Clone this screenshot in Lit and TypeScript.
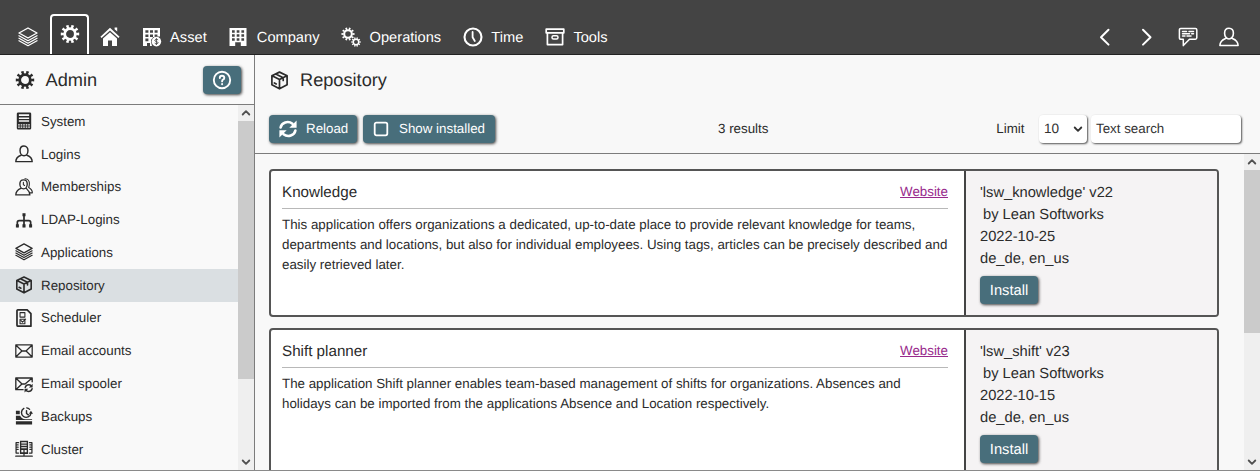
import { LitElement, html, css, svg } from "lit";
import { customElement, property } from "lit/decorators.js";
import { classMap } from "lit/directives/class-map.js";

const gear = (cx: number, cy: number, r: number) => svg`
  <circle cx=${cx} cy=${cy} r=${r * 0.56} fill="none" stroke="currentColor" stroke-width=${r * 0.3}></circle>
  <circle cx=${cx} cy=${cy} r=${r * 0.8} fill="none" stroke="currentColor" stroke-width=${r * 0.32}
    pathLength="100" stroke-dasharray="5 5" stroke-dashoffset="2.5"></circle>`;

const line = (d: string, w = 1.5) => svg`
  <path d=${d} fill="none" stroke="currentColor" stroke-width=${w} stroke-linejoin="round" stroke-linecap="round"></path>`;
const fill = (d: string) => svg`<path d=${d} fill="currentColor" fill-rule="evenodd"></path>`;

const icons: Record<string, unknown> = {
  layers: svg`${line("M10 1L19 6L10 11L1 6Z", 1.4)}${line("M1 8.7l9 5 9-5M1 11.2l9 5 9-5M1 13.7l9 5 9-5", 1.3)}`,
  gear: gear(10, 10, 9.6),
  home: fill("M10 .8L19.6 9.7L18.4 11L10 3.6L1.6 11L.4 9.7ZM14.6.6h2.6v4l-2.6-2.3ZM10 5.2L17 11.4V19h-5v-5.6H8V19H3v-7.6Z"),
  asset: svg`
    ${fill("M1 1h17v8.6h-2.6V7.4h-2.8V10h-1.4L9 13v2l1 4H1zM3.4 3.2v2.6h3V3.2zM8 3.2v2.6h3V3.2zM12.6 3.2v2.6h3V3.2zM3.4 7.4V10h3V7.4zM8 7.4V10h3V7.4zM3.4 11.6v2.6h3v-2.6zM5 16v3h3v-3z")}
    <circle cx="14.4" cy="14.6" r="4.8" fill="currentColor"></circle>
    <path d="M16.1 13c-.8-1.1-3.3-.8-3.3.5 0 1.3 3.3.9 3.3 2.2 0 1.3-2.5 1.5-3.4.4M14.4 11.2v6.8" fill="none" stroke="#444" stroke-width=".9"></path>`,
  company: fill("M1.5 1h17v18h-5.7v-3.8H7.2V19H1.5zM4 3.2v2.5h2.7V3.2zM8.7 3.2v2.5h2.7V3.2zM13.4 3.2v2.5h2.7V3.2zM4 7.3v2.5h2.7V7.3zM8.7 7.3v2.5h2.7V7.3zM13.4 7.3v2.5h2.7V7.3zM4 11.3v2.5h2.7v-2.5zM8.7 11.3v2.5h2.7v-2.5zM13.4 11.3v2.5h2.7v-2.5z"),
  gears: svg`${gear(7, 7, 6.8)}${gear(15, 15, 4.9)}`,
  clock: svg`<circle cx="10" cy="10" r="8.5" fill="none" stroke="currentColor" stroke-width="2.1"></circle>${line("M9.6 4.9V10.3L11.8 14", 1.8)}`,
  archive: svg`${line("M1.2 2.2h17.6v3.6h-17.6zM2.4 5.8v11.8h15.2V5.8", 1.7)}<rect x="7" y="8.8" width="6" height="3.2" rx="1.5" fill="none" stroke="currentColor" stroke-width="1.5"></rect>`,
  prev: line("M13.5 2.8L6 10.2l7.5 7.4", 2),
  next: line("M7 2.8l7.5 7.4L7 17.6", 2),
  chat: line("M2.8 1.4h14.6q1.4 0 1.4 1.4v8q0 1.4-1.4 1.4H11.5L5.3 18.6V12.2H2.8q-1.4 0-1.4-1.4v-8q0-1.4 1.4-1.4zM4.5 4.5h4M11 4.5h4.5M4.5 6.8h7M13.7 6.8h1.8M4.5 9.1h2.5M9 9.1h4", 1.5),
  person: line("M10 1.2C7.1 1.2 5.6 3.3 5.6 6.2C5.6 9.2 7.4 12 10 12S14.4 9.2 14.4 6.2C14.4 3.3 12.9 1.2 10 1.2zM6.6 11.4C3.5 12.6 1 14 .9 18.5h18.2C19 14 16.5 12.6 13.4 11.4", 1.6),
  members: svg`${line("M9.5 2C6.8 2 5.4 4 5.4 6.6C5.4 9.4 7 12 9.5 12S13.6 9.4 13.6 6.6C13.6 4 12 2 9.5 2zM6.4 11.6C3.5 12.9 1 14.3 .9 18.8h15.6C16.4 14.9 14 12.9 12.6 11.6", 1.5)}${line("M11 .9C15.5 .5 17 5 15.2 10.5C18 12 19.3 13.5 19.3 16.5h-2.5M9.3 4.8v2.5l1.3 1", 1.2)}`,
  system: svg`${fill("M3.5.5h13q1.5 0 1.5 1.5v16q0 1.5-1.5 1.5h-13Q2 19.5 2 18V2Q2 .5 3.5.5zM4.3 2.5v2h11.4v-2zM4.3 6v1.7h11.4V6zM4.3 9.2v1.5h11.4V9.2z")}<path d="M3.5 14.3h13M3.5 16.8h13" stroke="#f9f9f9" stroke-width="1.3" stroke-dasharray="1.8 1"></path>`,
  tree: svg`${line("M10 4v13M2.6 17v-4.2Q2.6 10.8 4.6 10.8h10.8q2 0 2 2V17", 1.9)}${fill("M8.3 2.5h3.4v3.4H8.3zM1 14.8h3.3v3.4H1zM8.3 14.8h3.4v3.4H8.3zM15.7 14.8H19v3.4h-3.3z")}`,
  box: line("M10 1.2L18 4.9V14.5L10 18.7L2 14.5V4.9ZM2.2 5L10 8.9L17.8 5M10 9v9.5M6 3.1L13.9 7V10M4.6 12.6l2 1", 1.8),
  schedule: svg`${line("M3.5 .9h10L17.7 5.2V19.1h-14.2Q2.2 19.1 2.2 18V2Q2.2 .9 3.5 .9z", 1.9)}${line("M5.6 4h5.4v5h-5.4zM5.6 11.3h5.4v5h-5.4zM6.8 13l1.5 1.7 3.5-3.5", 1.2)}`,
  mail: line("M.9 3.3h18.2v13.4H.9zM1.2 3.6L7.8 10h4.4L18.8 3.6M1.2 16.4L7.4 10.2M18.8 16.4L12.6 10.2", 1.4),
  spool: svg`${line("M9 16.3H.9V3.3h18.2V7.5M1.2 3.6L7.8 10h3.4L18.8 3.6M1.2 16L7.4 10.2", 1.5)}${line("M11.3 13.8Q12.3 10.8 15.3 10.8Q17 10.8 18 12M19 15.2Q18 18.3 15 18.3Q13.2 18.3 12.2 17", 1.6)}${fill("M19.6 9.6v4.2h-4.2zM10.6 19.5v-4.2h4.2z")}`,
  backup: svg`${fill("M1 4.2h4.3v3.8H1zM1 9.6h4.7q1.8 3.6 5.8 3.9H19v1H1zM1 15.8h18v3.7H1z")}${line("M9.8 1.6A5.3 5.3 0 1 0 17.7 7M12.8 4v3.2l2 1.5", 1.6)}${line("M13 .9q2 .2 3.3 1.7", 1.4)}${fill("M15.4 7.4h4.6l-2.3-3.2z")}`,
  cluster: svg`${fill("M5.5.8h9v14.7h-9zM7 2.6v1.4h6V2.6zM7 5.3v1.2h6V5.3zM7 8v1.2h6V8zM7 11v2.5h2.3V11zM10.7 11v2.5H13V11z")}${line("M4 3H1.2v11.5H4M16 3h2.8v11.5H16M2.5 5.5h1M2.5 8h1M2.5 10.5h1M16.5 5.5h1M16.5 8h1M16.5 10.5h1M10 15.5v2M.8 18h18.4", 1.4)}`,
  help: svg`<circle cx="10" cy="10" r="8.2" fill="none" stroke="currentColor" stroke-width="1.9"></circle>${line("M7.8 8Q7.8 5.7 10 5.7T12.3 7.7Q12.3 9 11 9.7Q10.1 10.2 10.1 11.4M10.1 14v.2", 1.9)}`,
  reload: svg`${line("M2.6 8.5C3.5 3.6 10 1.2 14.5 4.8M17.4 11.5C16.5 16.4 10 18.8 5.5 15.2", 2.6)}${fill("M18.6 1.5v7.3h-7.3zM1.4 18.5v-7.3h7.3z")}`,
  check: svg`<rect x="3.7" y="3.7" width="12.6" height="12.6" rx="1.7" fill="none" stroke="currentColor" stroke-width="1.8"></rect>`,
  up: line("M6.7 11.5L10 8.2l3.3 3.3", 1.8),
  down: line("M6.7 8.5L10 11.8l3.3-3.3", 1.8),
};

@customElement("ui-icon")
class UiIcon extends LitElement {
  @property() name = "";
  @property({ type: Number }) size = 20;
  static styles = css`
    :host { display: block; flex: none; line-height: 0; }
    svg { display: block; }
  `;
  render() {
    return html`<svg width=${this.size} height=${this.size} viewBox="0 0 20 20">${icons[this.name]}</svg>`;
  }
}

@customElement("ui-scrollbar")
class UiScrollbar extends LitElement {
  @property({ type: Number }) thumb = 100;
  static styles = css`
    :host { display: flex; flex-direction: column; flex: none; width: 16px; background: #efefef; color: #505050; overflow: hidden; }
    .end { height: 16px; display: flex; align-items: center; justify-content: center; flex: none; }
    .thumb { background: #cbcbcb; flex: none; }
    .space { flex: 1; }
  `;
  render() {
    return html`<div class="end"><ui-icon name="up"></ui-icon></div>
      <div class="thumb" style="height:${this.thumb}px"></div>
      <div class="space"></div>
      <div class="end"><ui-icon name="down"></ui-icon></div>`;
  }
}

const nav = [
  ["asset", "Asset"], ["company", "Company"], ["gears", "Operations"], ["clock", "Time"], ["archive", "Tools"],
];

const menu = [
  ["system", "System"], ["person", "Logins"], ["members", "Memberships"], ["tree", "LDAP-Logins"],
  ["layers", "Applications"], ["box", "Repository"], ["schedule", "Scheduler"], ["mail", "Email accounts"],
  ["spool", "Email spooler"], ["backup", "Backups"], ["cluster", "Cluster"],
];

const apps = [
  {
    title: "Knowledge", id: "'lsw_knowledge' v22", date: "2022-10-25",
    lines: [
      "This application offers organizations a dedicated, up-to-date place to provide relevant knowledge for teams,",
      "departments and locations, but also for individual employees. Using tags, articles can be precisely described and",
      "easily retrieved later.",
    ],
  },
  {
    title: "Shift planner", id: "'lsw_shift' v23", date: "2022-10-15",
    lines: [
      "The application Shift planner enables team-based management of shifts for organizations. Absences and",
      "holidays can be imported from the applications Absence and Location respectively.",
    ],
  },
];

@customElement("app-root")
class AppRoot extends LitElement {
  static styles = css`
    :host { display: flex; flex-direction: column; width: 1260px; height: 471px; overflow: hidden; box-sizing: border-box;
      background: #f8f8f8; color: #2b2b2b; font: 13.35px "Liberation Sans", Arial, sans-serif; text-rendering: geometricPrecision;
      border-bottom: 1px solid #8a8a8a; white-space: nowrap; }
    * { box-sizing: border-box; }
    .top { height: 55px; flex: none; background: #444; border-bottom: 1px solid #222; color: #fff; display: flex; align-items: flex-end; padding-left: 18px; }
    .nav { height: 34px; display: flex; align-items: center; font-size: 14.65px; }
    .nav span { padding-top: 2px; }
    .tab { margin-left: 12px; width: 39px; height: 40px; border: 2px solid #fff; border-bottom: 0; border-radius: 4px 4px 0 0; background: #3d3d3d; display: flex; justify-content: center; padding-top: 8px; }
    .item { display: flex; align-items: center; gap: 8.5px; margin-left: 21.6px; }
    .item.first { margin-left: 11px; }
    .right { margin-left: auto; padding-right: 21px; gap: 21.3px; }
    .body { flex: 1; min-height: 0; display: flex; }
    .side { width: 255px; flex: none; border-right: 1px solid #7c7c7c; display: flex; flex-direction: column; background: #f9f9f9; }
    .sidehead { height: 50px; flex: none; border-bottom: 1px solid #7c7c7c; display: flex; align-items: center; padding: 0 13px 0 14.5px; }
    .title { font-size: 18.2px; margin-left: 11px; line-height: 22px; }
    .btn { background: #486e7b; color: #fff; border-radius: 4px; height: 28px; display: flex; align-items: center; box-shadow: 1px 1px 3px #444; }
    .help { margin-left: auto; width: 38px; justify-content: center; }
    .scroll { flex: 1; min-height: 0; display: flex; }
    .menu { flex: 1; overflow: hidden; }
    .row { height: 32.77px; display: flex; align-items: center; gap: 8px; padding-left: 15px; }
    .sel { background: #dadfe2; }
    .main { flex: 1; min-width: 0; display: flex; flex-direction: column; }
    .mainhead { height: 50px; display: flex; align-items: center; padding-left: 15px; flex: none; }
    .bar { height: 49px; flex: none; border-bottom: 1px solid #7c7c7c; display: flex; align-items: flex-start; padding: 10px 19px 0 14px; }
    .bar span, .bar .btn, .field { line-height: 28px; }
    .reload { width: 88px; padding-left: 9px; gap: 8px; margin-right: 6px; }
    .show { width: 132px; padding-left: 8px; gap: 8px; }
    .count { margin-left: 223px; }
    .limit { margin-left: auto; }
    .field { height: 28px; background: #fff; border-radius: 4px; box-shadow: 1px 1px 2px #555; padding-left: 5px; color: #333; }
    .select { width: 48px; margin: 0 4px 0 14.5px; display: flex; font-size: 13.6px; align-items: center; justify-content: space-between; }
    .select ui-icon { margin-right: -1px; }
    .search { width: 150px; }
    .cards { flex: 1; overflow: hidden; padding: 15px 25px 0 14px; display: flex; flex-direction: column; gap: 11px; }
    .card { height: 148px; flex: none; border: 2px solid #555; border-radius: 4px; display: flex; background: #fff; overflow: hidden; }
    .info { flex: 1; min-width: 0; padding: 0 16px 0 11px; }
    .name { height: 38px; line-height: 43px; display: flex; justify-content: space-between; font-size: 15.2px; border-bottom: 1px solid #b8b8b8; }
    .link { color: #982a8c; text-decoration: underline; font-size: 13.35px; line-height: 41px; }
    .desc { line-height: 20px; padding-top: 6px; }
    .meta { width: 253px; flex: none; border-left: 2px solid #444; background: #f5f3f4; padding: 11px 0 0 14px; font-size: 14.7px; line-height: 22px; }
    .by { padding-left: 3px; }
    .install { width: 58px; margin-top: 6px; padding-top: 2px; justify-content: center; }
  `;
  render() {
    return html`
      <div class="top">
        <div class="nav"><ui-icon name="layers"></ui-icon></div>
        <div class="tab"><ui-icon name="gear"></ui-icon></div>
        <div class="nav">
          <div class="item first"><ui-icon name="home"></ui-icon></div>
          ${nav.map(([icon, label]) => html`<div class="item"><ui-icon name=${icon}></ui-icon><span>${label}</span></div>`)}
        </div>
        <div class="nav right">${["prev", "next", "chat", "person"].map((n) => html`<ui-icon name=${n}></ui-icon>`)}</div>
      </div>
      <div class="body">
        <div class="side">
          <div class="sidehead"><ui-icon name="gear"></ui-icon><span class="title">Admin</span><div class="btn help"><ui-icon name="help"></ui-icon></div></div>
          <div class="scroll">
            <div class="menu">
              ${menu.map(([icon, label]) => html`<div class=${classMap({ row: true, sel: label === "Repository" })}><ui-icon name=${icon} size="18"></ui-icon><span>${label}</span></div>`)}
            </div>
            <ui-scrollbar thumb="258"></ui-scrollbar>
          </div>
        </div>
        <div class="main">
          <div class="mainhead"><ui-icon name="box" size="19"></ui-icon><span class="title">Repository</span></div>
          <div class="bar">
            <div class="btn reload"><ui-icon name="reload"></ui-icon>Reload</div>
            <div class="btn show"><ui-icon name="check"></ui-icon>Show installed</div>
            <span class="count">3 results</span>
            <span class="limit">Limit</span>
            <div class="field select">10<ui-icon name="down"></ui-icon></div>
            <div class="field search">Text search</div>
          </div>
          <div class="scroll">
            <div class="cards">
              ${apps.map((a) => html`<div class="card">
                <div class="info">
                  <div class="name"><span>${a.title}</span><span class="link">Website</span></div>
                  <div class="desc">${a.lines.map((l) => html`<div>${l}</div>`)}</div>
                </div>
                <div class="meta">
                  <div>${a.id}</div><div class="by">by Lean Softworks</div><div>${a.date}</div><div>de_de, en_us</div>
                  <div class="btn install">Install</div>
                </div>
              </div>`)}
            </div>
            <ui-scrollbar thumb="163"></ui-scrollbar>
          </div>
        </div>
      </div>`;
  }
}
